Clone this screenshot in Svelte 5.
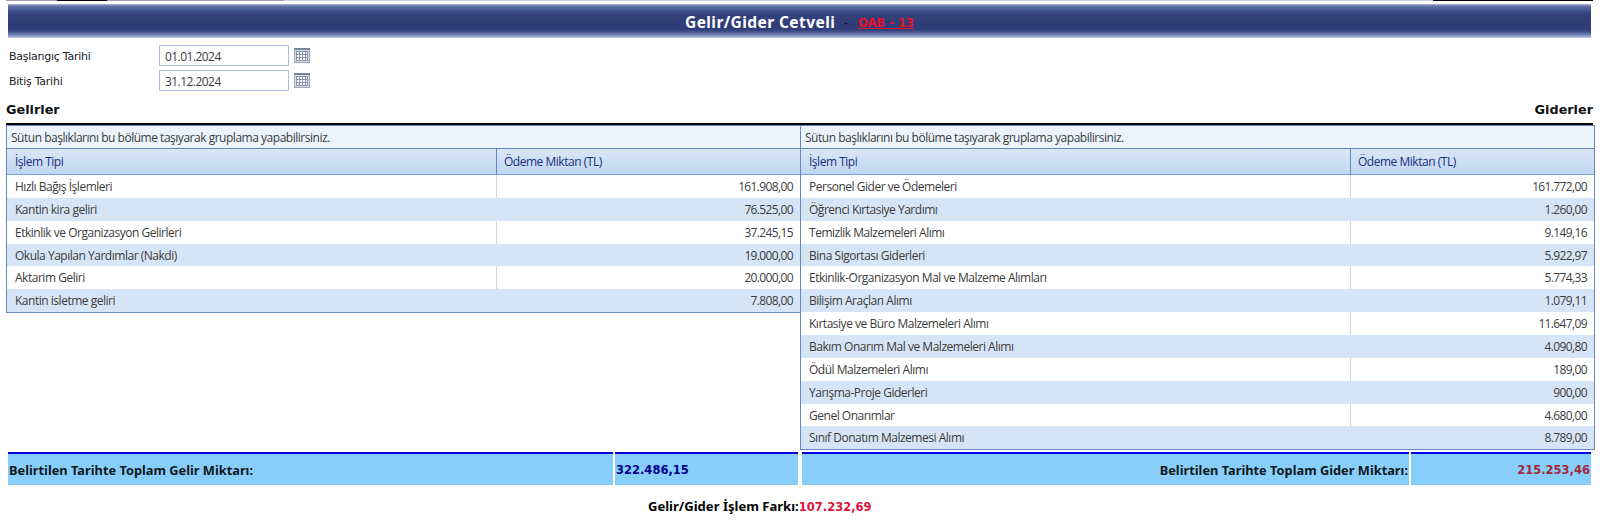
<script lang="ts">
  type Row = { name: string; amount: string };

  const incomes: Row[] = [
    { name: 'Hızlı Bağış İşlemleri', amount: '161.908,00' },
    { name: 'Kantin kira geliri', amount: '76.525,00' },
    { name: 'Etkinlik ve Organizasyon Gelirleri', amount: '37.245,15' },
    { name: 'Okula Yapılan Yardımlar (Nakdi)', amount: '19.000,00' },
    { name: 'Aktarim Geliri', amount: '20.000,00' },
    { name: 'Kantin isletme geliri', amount: '7.808,00' }
  ];

  const expenses: Row[] = [
    { name: 'Personel Gider ve Ödemeleri', amount: '161.772,00' },
    { name: 'Öğrenci Kırtasiye Yardımı', amount: '1.260,00' },
    { name: 'Temizlik Malzemeleri Alımı', amount: '9.149,16' },
    { name: 'Bina Sigortası Giderleri', amount: '5.922,97' },
    { name: 'Etkinlik-Organizasyon Mal ve Malzeme Alımları', amount: '5.774,33' },
    { name: 'Bilişim Araçları Alımı', amount: '1.079,11' },
    { name: 'Kırtasiye ve Büro Malzemeleri Alımı', amount: '11.647,09' },
    { name: 'Bakım Onarım Mal ve Malzemeleri Alımı', amount: '4.090,80' },
    { name: 'Ödül Malzemeleri Alımı', amount: '189,00' },
    { name: 'Yarışma-Proje Giderleri', amount: '900,00' },
    { name: 'Genel Onarımlar', amount: '4.680,00' },
    { name: 'Sınıf Donatım Malzemesi Alımı', amount: '8.789,00' }
  ];

  const grids = [
    { id: 'income', rows: incomes },
    { id: 'expense', rows: expenses }
  ];

  let dates = [
    { label: 'Başlangıç Tarihi', value: '01.01.2024' },
    { label: 'Bitiş Tarihi', value: '31.12.2024' }
  ];
</script>

<div class="page">
  <div class="strip"><i class="mauve"></i><i class="dark"></i><i class="mauve wide"></i><i class="pale"></i><i class="dark end"></i></div>

  <header class="banner">
    <span class="title">Gelir/Gider Cetveli</span>
    <span class="dash">-</span>
    <span class="code">OAB - 13</span>
  </header>

  <div class="filters">
    {#each dates as date}
      <div class="filter">
        <span class="filter-label">{date.label}</span>
        <span class="date">{date.value}</span>
        <svg width="16" height="15" viewBox="0 0 16 15">
          <rect x="0.5" y="0.5" width="15" height="14" fill="#d5dee8" stroke="#9aa9b9" />
          <rect x="0" y="0" width="16" height="2" fill="#73869a" />
          <rect x="2" y="3" width="12" height="10" fill="#8594a6" />
          {#each [4, 7, 10] as y}
            {#each [3, 6, 9, 12] as x}
              <rect {x} {y} width={x === 12 ? 1 : 2} height="2" fill="#fff" />
            {/each}
          {/each}
        </svg>
      </div>
    {/each}
  </div>

  <div class="headings">
    <span>Gelirler</span>
    <span>Giderler</span>
  </div>

  <div class="grids">
    {#each grids as grid}
      <div class="grid {grid.id}">
        <div class="group-panel">Sütun başlıklarını bu bölüme taşıyarak gruplama yapabilirsiniz.</div>
        <div class="row head">
          <div class="cell">İşlem Tipi</div>
          <div class="cell">Ödeme Miktarı (TL)</div>
        </div>
        {#each grid.rows as row, i}
          <div class="row" class:alt={i % 2 === 1}>
            <div class="cell">{row.name}</div>
            <div class="cell amount">{row.amount}</div>
          </div>
        {/each}
      </div>
    {/each}
  </div>

  <div class="totals">
    <div class="total"><span>Belirtilen Tarihte Toplam Gelir Miktarı:</span></div>
    <div class="total blue"><span>322.486,15</span></div>
    <div class="total right gap"><span>Belirtilen Tarihte Toplam Gider Miktarı:</span></div>
    <div class="total right red"><span>215.253,46</span></div>
  </div>

  <div class="difference">Gelir/Gider İşlem Farkı:<span>107.232,69</span></div>
</div>

<style>
  :global(body) {
    background: #fff;
    overflow: hidden;
  }

  .page {
    width: 1600px;
    height: 523px;
    box-sizing: border-box;
    padding-left: 6px;
    overflow: hidden;
    font-family: 'Open Sans', 'Noto Sans', sans-serif;
    font-size: 12px;
    white-space: nowrap;
    color: #3c3c3c;
  }

  .strip {
    display: flex;
    height: 1px;
    width: 1587px;
    margin-bottom: 3px;
  }

  .mauve {
    width: 51px;
    background: #a99ba3;
  }

  .mauve.wide {
    width: 177px;
  }

  .dark {
    width: 50px;
    background: #000;
  }

  .dark.end {
    width: 160px;
  }

  .pale {
    flex: 1;
    background: #c8d7e6;
  }

  .banner {
    display: flex;
    align-items: center;
    width: 1583px;
    height: 34px;
    box-sizing: border-box;
    margin-left: 2px;
    padding: 1px 0 0 677px;
    background: linear-gradient(#b0bcdc 0, #6676aa 2px, #5063a0 4px, #3c4c86 8px, #344179 11px, #2e3b76 25px, #3b4984 27px, #6472a8 30px, #8d9bc9 32px, #c0cae6 34px);
    font-family: 'Noto Sans', sans-serif;
    font-weight: bold;
  }

  .title {
    width: 159px;
    font-size: 15.5px;
    letter-spacing: 0.42px;
    color: #fff;
  }

  .dash {
    width: 14px;
    font-size: 11px;
    color: #10173a;
  }

  .code {
    font-family: 'DejaVu Sans', sans-serif;
    font-size: 11.5px;
    color: #e8102c;
    text-decoration: underline;
    padding-top: 3px;
  }

  .filters {
    padding: 7px 0 0 3px;
  }

  .filter {
    display: flex;
    align-items: center;
    height: 21px;
    margin-bottom: 4px;
  }

  .filter-label {
    width: 150px;
    font-family: 'DejaVu Sans', sans-serif;
    font-size: 11px;
    letter-spacing: -0.25px;
    color: #222;
    padding-top: 2px;
  }

  .date {
    width: 130px;
    height: 21px;
    box-sizing: border-box;
    border: 1px solid #a9bedb;
    padding-left: 5px;
    line-height: 21px;
    letter-spacing: -0.55px;
    margin-right: 5px;
  }

  .headings {
    display: flex;
    justify-content: space-between;
    align-items: center;
    width: 1587px;
    height: 32px;
    box-sizing: border-box;
    padding-top: 3px;
    margin-top: -2px;
    border-bottom: 2px solid #000;
    font-family: 'DejaVu Sans', sans-serif;
    font-weight: bold;
    font-size: 12.8px;
    color: #111;
  }

  .grids {
    display: flex;
    align-items: flex-start;
    height: 327px;
  }

  .grid {
    box-sizing: border-box;
    width: 795px;
    border: 1px solid #6788be;
    letter-spacing: -0.48px;
  }

  .grid.income {
    width: 794px;
    border-right: 0;
  }

  .group-panel {
    height: 22px;
    padding-left: 4px;
    line-height: 24px;
    background: #ebf3fd;
    border-bottom: 1px solid #6788be;
  }

  .row {
    display: grid;
    grid-template-columns: 489px 1fr;
    height: 22.87px;
    line-height: 23px;
  }

  .expense .row {
    grid-template-columns: 549px 1fr;
  }

  .cell {
    box-sizing: border-box;
    padding: 0 7px 0 8px;
  }

  .cell + .cell {
    border-left: 1px solid #d0d7e5;
  }

  .cell.amount {
    text-align: right;
    letter-spacing: -0.63px;
    padding-right: 7px;
  }

  .row.alt {
    background: #d6e5f5;
  }

  .row.alt .cell {
    border-color: #d6e5f5;
  }

  .row.head {
    height: 26px;
    box-sizing: border-box;
    line-height: 26px;
    color: #1b2f7c;
    background: linear-gradient(#dbe6f5, #bfd7f3);
    border-bottom: 1px solid #79a1d5;
  }

  .row.head .cell + .cell {
    border-left-color: #5e8ac4;
    padding-left: 7px;
  }

  .totals {
    display: grid;
    grid-template-columns: 605px 183px 609px 180px;
    gap: 2px;
    width: 1583px;
    margin-left: 2px;
    font-family: 'Noto Sans', sans-serif;
    font-weight: bold;
    font-size: 12.8px;
    color: #101820;
  }

  .total {
    height: 33px;
    box-sizing: border-box;
    border-top: 2px solid #0000d8;
    background: #87cefa;
    line-height: 32px;
    padding: 0 1px;
  }

  .total.gap {
    margin-left: 2px;
  }

  .total.right {
    text-align: right;
  }

  .total.blue {
    color: #00008b;
    font-family: 'DejaVu Sans', sans-serif;
    font-size: 11.5px;
  }

  .total.red {
    color: #a52a3a;
    font-family: 'DejaVu Sans', sans-serif;
    font-size: 11.5px;
  }

  .difference {
    margin: 11px 0 0 642px;
    font-family: 'Noto Sans', sans-serif;
    font-weight: bold;
    font-size: 13.05px;
    line-height: 20px;
    color: #000;
  }

  .difference span {
    color: #dc143c;
    font-family: 'DejaVu Sans', sans-serif;
    font-size: 11.5px;
  }
</style>
